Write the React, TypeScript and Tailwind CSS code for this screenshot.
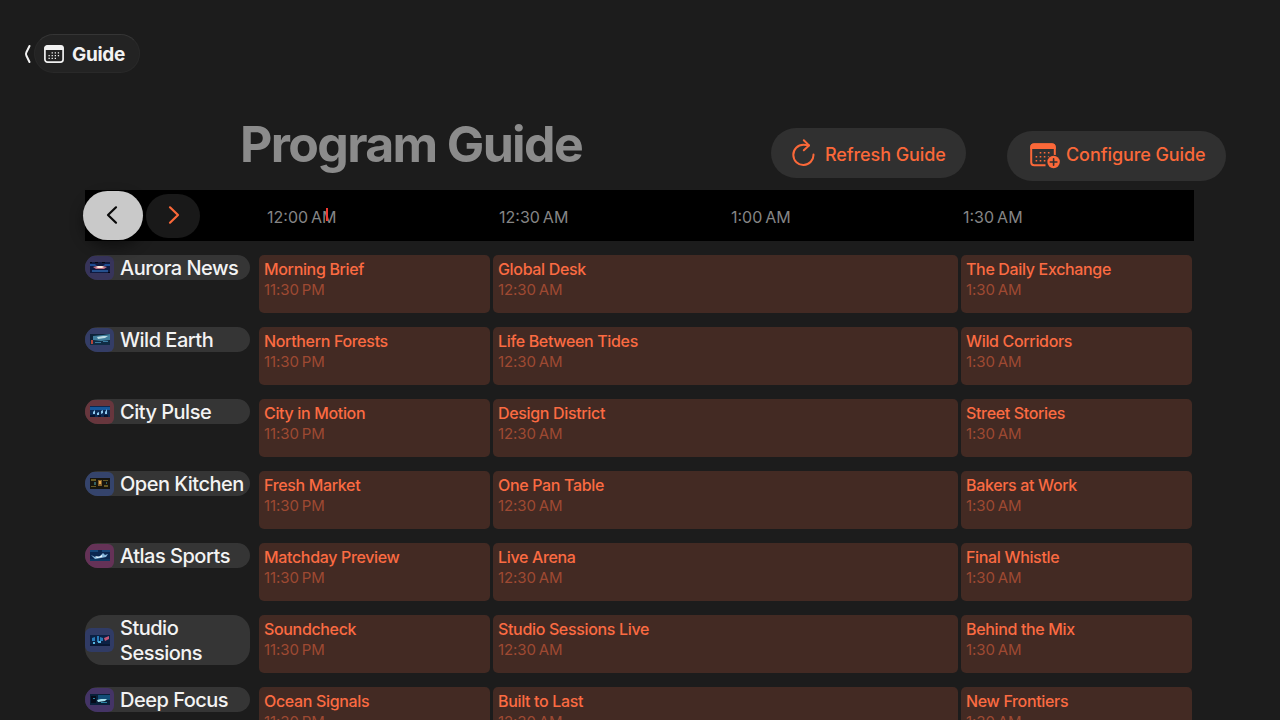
import { ReactNode } from "react";

interface Channel {
  name: string;
  tint: string;
  art: ReactNode;
  programs: [string, string, string];
}

const channels: Channel[] = [
  {
    name: "Aurora News",
    tint: "bg-[#37345a]",
    art: (
      <>
        <rect width="20" height="11" fill="#10193f" />
        <path d="M0 2h5l2 2H0zM20 2h-5l-2 2h7z" fill="#1f4c91" />
        <path d="M2 8h16v2H2z" fill="#25508d" />
        <path d="M3 5l4-1h6l4 1-3 2H6z" fill="#b96f85" />
        <path d="M6 5l2-1h4l2 1-2 1H8z" fill="#ffe9dc" />
        <path d="M0 0h2v1H0zM5 0h3v1H5zM12 0h3v1h-3zM18 10h2v1h-2z" fill="#05060f" />
      </>
    ),
    programs: ["Morning Brief", "Global Desk", "The Daily Exchange"],
  },
  {
    name: "Wild Earth",
    tint: "bg-[#343d66]",
    art: (
      <>
        <rect width="20" height="11" fill="#0d2338" />
        <path d="M3 2l10-1 7-1v6l-9 1-8-1z" fill="#3f7d9c" />
        <path d="M7 3l6-1 5 0-3 2-7 1z" fill="#b9dbe4" />
        <path d="M0 7h20v4H0z" fill="#102c44" />
        <path d="M1 6h2v4H1z" fill="#b4443a" />
        <path d="M5 8h6v1H5zM13 7h5v1h-5z" fill="#3c7da3" />
      </>
    ),
    programs: ["Northern Forests", "Life Between Tides", "Wild Corridors"],
  },
  {
    name: "City Pulse",
    tint: "bg-[#67363d]",
    art: (
      <>
        <rect width="20" height="11" fill="#0c2850" />
        <path d="M0 1h20v3H0z" fill="#16579a" />
        <path d="M3 6l2-2v4H3zM7 7l2-1v3H7zM11 5l2-1v3l-2 1zM15 6l2-3v5h-2z" fill="#8fc9ee" />
        <path d="M0 9h5v2H0zM8 9h3v2H8zM14 9h4v2h-4z" fill="#07142d" />
      </>
    ),
    programs: ["City in Motion", "Design District", "Street Stories"],
  },
  {
    name: "Open Kitchen",
    tint: "bg-[#35446c]",
    art: (
      <>
        <rect width="20" height="11" fill="#17150f" />
        <path d="M1 1h5v2H1zM13 2h5v1h-5zM1 8h5v1H1zM14 7h4v2h-4z" fill="#665a24" />
        <path d="M8 2h4v6H8z" fill="#83602a" />
        <path d="M9 3h2v3H9z" fill="#e5a64c" />
        <path d="M4 4h2v3H4zM16 4h1v2h-1z" fill="#356161" />
      </>
    ),
    programs: ["Fresh Market", "One Pan Table", "Bakers at Work"],
  },
  {
    name: "Atlas Sports",
    tint: "bg-[#653257]",
    art: (
      <>
        <rect width="20" height="11" fill="#0b2750" />
        <path d="M0 0h8v2H0zM12 0h8v2h-8z" fill="#164677" />
        <path d="M1 5l4 2 5-1 3-3 2 2 3-1-2 3-5 1-6 1z" fill="#89b9dc" />
        <path d="M5 6l4 1 3-2v2l-5 1z" fill="#ecf8ff" />
        <path d="M0 9h20v2H0z" fill="#0e3760" />
      </>
    ),
    programs: ["Matchday Preview", "Live Arena", "Final Whistle"],
  },
  {
    name: "Studio Sessions",
    tint: "bg-[#303b65]",
    art: (
      <>
        <rect width="20" height="11" fill="#0b2145" />
        <path d="M2 3l3-1v4H2zM7 1h2v6H7zM10 2l3 1v3h-3z" fill="#277ab6" />
        <path d="M3 7h2v2H3zM8 6h3v2H8z" fill="#54b5df" />
        <path d="M14 3l5-2v3l-4 2z" fill="#c35676" />
        <path d="M0 9h20v2H0z" fill="#091733" />
      </>
    ),
    programs: ["Soundcheck", "Studio Sessions Live", "Behind the Mix"],
  },
  {
    name: "Deep Focus",
    tint: "bg-[#443466]",
    art: (
      <>
        <rect width="20" height="11" fill="#082039" />
        <path d="M8 1h12v5H8z" fill="#124d77" />
        <path d="M1 2h5v7H1z" fill="#050b1a" />
        <path d="M7 6l4-1 6 0-2 2-7 1z" fill="#a8e1ed" />
        <path d="M3 4h2v1H3zM11 8h6v1h-6z" fill="#2b85a6" />
      </>
    ),
    programs: ["Ocean Signals", "Built to Last", "New Frontiers"],
  },
];

const slots = ["12:00", "12:30", "1:00", "1:30"];

const CalendarIcon = () => (
  <svg viewBox="0 0 20 18" className="h-[18px] w-5 text-[#f2f2f2]" fill="none">
    <rect x="0.9" y="0.9" width="18.200" height="16.200" rx="2.600" stroke="currentColor" strokeWidth="1.700" />
    <path d="M0.500 5V3A2.500 2.500 0 0 1 3 0.500h14A2.500 2.500 0 0 1 19.500 3V5z" fill="currentColor" />
    <path d="M7.600 7.800h1.300M10.700 7.800h1.300M13.800 7.800h1.300M4.500 10.600h1.300M7.600 10.600h1.300M10.700 10.600h1.300M13.800 10.600h1.300M4.500 13.400h1.300M7.600 13.400h1.300M10.700 13.400h1.300" stroke="currentColor" strokeWidth="1.300" />
  </svg>
);

const CalendarPlusIcon = () => (
  <svg viewBox="0 0 30 26" className="mb-px h-[26px] w-[30px] text-[#fb6839]" fill="none">
    <path d="M15.500 22.200H4.200A3 3 0 0 1 1.200 19.200V4.200A3 3 0 0 1 4.200 1.200h17.600A3 3 0 0 1 24.800 4.200V12" stroke="currentColor" strokeWidth="2" />
    <path d="M.300 6V4A3.500 3.500 0 0 1 3.800 .500h18.200A3.500 3.500 0 0 1 25.700 4V6z" fill="currentColor" />
    <path d="M9.700 9.700h1.600M13.800 9.700h1.600M17.900 9.700h1.600M5.600 13.700h1.600M9.700 13.700h1.600M13.800 13.700h1.600M17.900 13.700h1.600M5.600 17.700h1.600M9.700 17.700h1.600M13.800 17.700h1.600" stroke="currentColor" strokeWidth="1.600" />
    <circle cx="23.600" cy="19" r="7.300" fill="#303030" />
    <circle cx="23.600" cy="19" r="6.200" fill="currentColor" />
    <path d="M23.600 15.700v6.600M20.300 19h6.600" stroke="#303030" strokeWidth="1.600" strokeLinecap="round" />
  </svg>
);

const RefreshIcon = () => (
  <svg viewBox="0 0 24 28" className="mb-0.5 h-7 w-6 text-[#fb6839]" fill="none" stroke="currentColor" strokeWidth="2" strokeLinecap="round" strokeLinejoin="round">
    <path d="M21.500 16.500A10.100 10.100 0 1 1 11.400 6.800Q14 6.800 17 7.400" />
    <path d="M11.800 2.200L17 7.400L11.800 12.200" />
  </svg>
);

const Time = ({ value, period }: { value: string; period: string }) => (
  <>
    {value}
    <span className="ml-[3px]">{period}</span>
  </>
);

const TimelineHeader = () => (
  <div className="relative ml-[85px] mt-[9px] flex h-[51px] w-[1109px] items-center bg-black">
    <button className="-ml-0.5 flex h-[49px] w-[60px] shrink-0 items-center justify-center rounded-[25px] bg-[#c9c9c9] shadow-[0_6px_14px_rgba(0,0,0,0.45)]">
      <svg viewBox="0 0 12 20" className="mb-px mr-[3px] h-5 w-3" fill="none" stroke="#080808" strokeWidth="2.2" strokeLinecap="round" strokeLinejoin="round">
        <path d="M10 2.300L2 10L10 17.700" />
      </svg>
    </button>
    <button className="ml-[3px] flex h-11 w-[54px] shrink-0 items-center justify-center rounded-[22px] bg-[#191919]">
      <svg viewBox="0 0 12 20" className="mb-px ml-px h-5 w-3" fill="none" stroke="#fb6839" strokeWidth="2.2" strokeLinecap="round" strokeLinejoin="round">
        <path d="M2 2.300L10 10L2 17.700" />
      </svg>
    </button>
    <div className="ml-[67px] flex pt-0.5">
      {slots.map((slot) => (
        <div key={slot} className="w-[232px] text-base leading-5 text-[#858585]">
          <Time value={slot} period="AM" />
        </div>
      ))}
    </div>
    <div className="absolute left-[241px] top-[18px] h-[13px] w-[1.5px] bg-[#ee3a32]" />
  </div>
);

const ProgramCell = ({ title, time, period, wide }: { title: string; time: string; period: string; wide?: boolean }) => (
  <div className={`h-[58px] shrink-0 rounded-[5px] bg-[#432a23] pl-[5px] pt-1 ${wide ? "w-[465px]" : "w-[231px]"}`}>
    <div className="text-base font-medium leading-5 tracking-[-0.34px] text-[#fb6b42]">{title}</div>
    <div className="text-[15px] leading-[21px] tracking-[-0.1px] text-[#9e4932]">
      <Time value={time} period={period} />
    </div>
  </div>
);

const ChannelRow = ({ channel }: { channel: Channel }) => (
  <div className="flex h-[58px] items-start gap-[3px]">
    <div className="mr-[6px] flex w-[165px] shrink-0 items-center overflow-hidden rounded-[17px] bg-[#353535]">
      <div className={`flex h-6 w-[29px] shrink-0 items-center justify-center rounded-[6px] ${channel.tint}`}>
        <svg viewBox="0 0 20 11" className="h-[11px] w-5">
          {channel.art}
        </svg>
      </div>
      <div className="relative top-px ml-[6px] text-xl font-medium leading-[25px] tracking-[-0.5px] text-[#f3f3f3]">{channel.name}</div>
    </div>
    <ProgramCell title={channel.programs[0]} time="11:30" period="PM" />
    <ProgramCell title={channel.programs[1]} time="12:30" period="AM" wide />
    <ProgramCell title={channel.programs[2]} time="1:30" period="AM" />
  </div>
);

const App = () => {
  return (
    <div className="h-[720px] w-[1280px] overflow-hidden bg-[#1c1c1c] font-['Inter',sans-serif]">
      <nav className="flex items-center pl-6 pt-[34px]">
        <svg viewBox="0 0 7 20" className="h-5 w-[7px]" fill="none" stroke="#f2f2f2" strokeWidth="2" strokeLinecap="round" strokeLinejoin="round">
          <path d="M5.500 2L2.300 8.500Q1.700 10 2.300 11.500L5.500 18" />
        </svg>
        <div className="ml-[3px] flex h-[39px] w-[106px] items-center gap-2 rounded-full border border-[#292929] border-t-[#353535] bg-[#232323] pl-[9px]">
          <CalendarIcon />
          <span className="mt-[3px] text-[19px] font-bold leading-6 tracking-[-0.3px] text-[#f2f2f2]">Guide</span>
        </div>
      </nav>
      <header className="mt-[46px] flex h-[62px] items-start pl-[240px]">
        <h1 className="w-[531px] text-[50px] font-bold leading-[50px] tracking-[-1.65px] text-[#8b8b8b]">Program Guide</h1>
        <button className="mt-[9px] flex h-[50px] w-[195px] items-center gap-[9px] rounded-[25px] bg-[#303030] pl-[21px] text-lg font-medium tracking-[-0.08px] text-[#fb6839]">
          <RefreshIcon />
          <span className="mt-1 whitespace-nowrap">Refresh Guide</span>
        </button>
        <button className="ml-[41px] mt-3 flex h-[50px] w-[219px] items-center gap-[6px] rounded-[25px] bg-[#303030] pl-[23px] text-lg font-medium tracking-[-0.08px] text-[#fb6839]">
          <CalendarPlusIcon />
          <span className="mb-0.5 whitespace-nowrap">Configure Guide</span>
        </button>
      </header>
      <TimelineHeader />
      <main className="mt-[14px] flex flex-col gap-[14px] pl-[85px]">
        {channels.map((channel) => (
          <ChannelRow key={channel.name} channel={channel} />
        ))}
      </main>
    </div>
  );
};

export default App;
